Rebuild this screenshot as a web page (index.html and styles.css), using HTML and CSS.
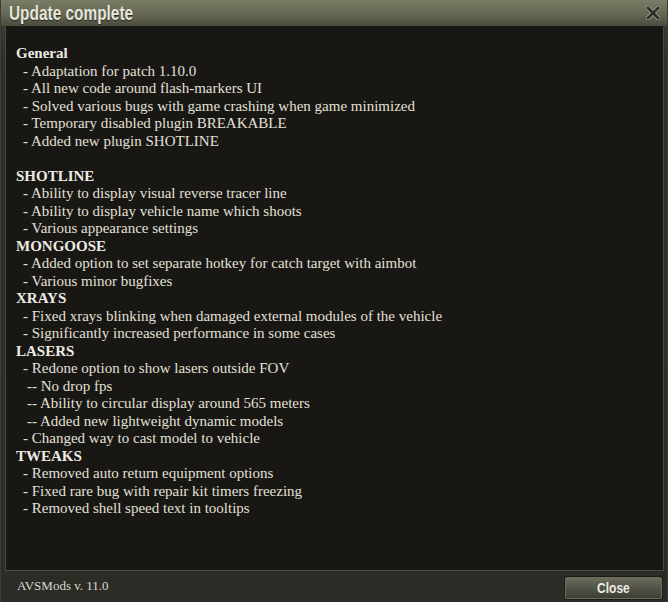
FILE: index.html
```html
<!DOCTYPE html>
<html>
<head>
<meta charset="utf-8">
<link rel="stylesheet" href="styles.css">
</head>
<body>
<div class="window">
  <div class="titlebar">
    <span class="title">Update complete</span>
    <span class="close-x">
      <svg width="14" height="14" viewBox="0 0 14 14"><path d="M2 2 L12 12 M12 2 L2 12" stroke="#9a9a90" stroke-width="4.4" stroke-linecap="square"/><path d="M2 2 L12 12 M12 2 L2 12" stroke="#2b2b27" stroke-width="2.6" stroke-linecap="square"/></svg>
    </span>
  </div>
  <div class="panel">
    <div class="h">General</div>
    <div class="i">- Adaptation for patch 1.10.0</div>
    <div class="i">- All new code around flash-markers UI</div>
    <div class="i">- Solved various bugs with game crashing when game minimized</div>
    <div class="i">- Temporary disabled plugin BREAKABLE</div>
    <div class="i">- Added new plugin SHOTLINE</div>
    <div class="blank"></div>
    <div class="h">SHOTLINE</div>
    <div class="i">- Ability to display visual reverse tracer line</div>
    <div class="i">- Ability to display vehicle name which shoots</div>
    <div class="i">- Various appearance settings</div>
    <div class="h">MONGOOSE</div>
    <div class="i">- Added option to set separate hotkey for catch target with aimbot</div>
    <div class="i">- Various minor bugfixes</div>
    <div class="h">XRAYS</div>
    <div class="i">- Fixed xrays blinking when damaged external modules of the vehicle</div>
    <div class="i">- Significantly increased performance in some cases</div>
    <div class="h">LASERS</div>
    <div class="i">- Redone option to show lasers outside FOV</div>
    <div class="ii">-- No drop fps</div>
    <div class="ii">-- Ability to circular display around 565 meters</div>
    <div class="ii">-- Added new lightweight dynamic models</div>
    <div class="i">- Changed way to cast model to vehicle</div>
    <div class="h">TWEAKS</div>
    <div class="i">- Removed auto return equipment options</div>
    <div class="i">- Fixed rare bug with repair kit timers freezing</div>
    <div class="i">- Removed shell speed text in tooltips</div>
  </div>
  <div class="footer">
    <span class="ver">AVSMods v. 11.0</span>
    <button class="btn"><span class="btn-label">Close</span></button>
  </div>
</div>
</body>
</html>
```

FILE: styles.css
```css
html, body {
  margin: 0;
  padding: 0;
  background: #2a2a25;
}
.window {
  width: 668px;
  height: 602px;
  display: flex;
  flex-direction: column;
  background: linear-gradient(to bottom, #6e6f5a 0px, #5a5b49 14px, #3a3a32 26px, #2f2f2a 60px, #2c2c27 100%);
  box-sizing: border-box;
  border-left: 1px solid #3d3d35;
  border-right: 1px solid #3d3d35;
}
.titlebar {
  height: 26px;
  display: flex;
  align-items: center;
  justify-content: space-between;
  padding: 0 7px 0 8px;
  background: linear-gradient(to bottom, #7b7c66 0%, #666752 55%, #4b4b3e 100%);
  flex: none;
}
.title {
  font-family: "Liberation Sans Narrow", "Liberation Sans", sans-serif;
  font-weight: bold;
  font-size: 20px;
  color: #e6e6dc;
  text-shadow: 0 1px 1px rgba(0,0,0,0.6);
  display: inline-block;
  transform: scaleX(0.77);
  transform-origin: left center;
}
.close-x {
  display: flex;
  margin-top: -1px;
}
.panel {
  flex: none;
  height: 545px;
  margin: 0 3px 0 4px;
  box-sizing: border-box;
  border: 1px solid #4a4a40;
  border-top-color: #1a1a16;
  background: #191714;
  padding: 18px 0 0 10px;
  font-family: "Liberation Serif", "Times New Roman", serif;
  font-size: 15px;
  line-height: 17.5px;
  color: #e2e0d6;
}
.h {
  font-weight: bold;
  color: #ecebe3;
}
.i {
  padding-left: 7px;
}
.ii {
  padding-left: 11px;
}
.blank {
  height: 17.5px;
}
.footer {
  flex: 1;
  display: flex;
  align-items: center;
  justify-content: space-between;
  padding: 0 5px 2px 16px;
}
.ver {
  font-family: "Liberation Serif", "Times New Roman", serif;
  font-size: 13px;
  color: #d8d8ce;
}
.btn {
  width: 97px;
  height: 22px;
  border: 1px solid #6b6c5c;
  border-radius: 2px;
  background: linear-gradient(to bottom, #6a6b58 0%, #55564a 45%, #3c3d34 100%);
  box-shadow: 0 0 0 1px #1c1c18;
  padding: 0;
  margin-top: 4px;
  display: flex;
  align-items: center;
  justify-content: center;
}
.btn-label {
  font-family: "Liberation Sans Narrow", "Liberation Sans", sans-serif;
  font-weight: bold;
  font-size: 15px;
  color: #ecece2;
  display: inline-block;
  transform: scaleX(0.8);
}
```
